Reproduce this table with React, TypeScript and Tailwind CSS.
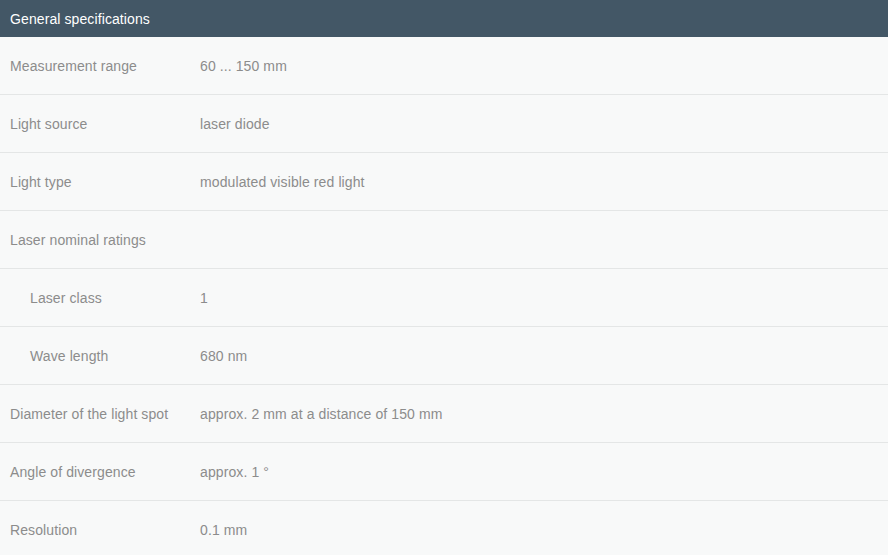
type Spec = {
    label: string,
    value?: string,
    indent?: boolean
}

const specs: Spec[] = [
    { label: "Measurement range", value: "60 ... 150 mm" },
    { label: "Light source", value: "laser diode" },
    { label: "Light type", value: "modulated visible red light" },
    { label: "Laser nominal ratings" },
    { label: "Laser class", value: "1", indent: true },
    { label: "Wave length", value: "680 nm", indent: true },
    { label: "Diameter of the light spot", value: "approx. 2 mm at a distance of 150 mm" },
    { label: "Angle of divergence", value: "approx. 1 °" },
    { label: "Resolution", value: "0.1 mm" },
]

export default function App() {
    return (
        <div className="w-[888px] h-[555px] overflow-hidden bg-[#f8f9f9] font-['Liberation_Sans',Arial,sans-serif] text-[14px] tracking-[0.1px]">
            <div className="h-[37px] bg-[#435766] text-white flex items-center px-[10px] pt-[1px]">
                General specifications
            </div>
            {specs.map((s, i) => (
                <div key={i} className="h-[58px] flex items-center border-b border-[#e4e6e6] text-[#8c8c8c] pt-[2px]">
                    <div className={s.indent ? "w-[200px] pl-[30px]" : "w-[200px] pl-[10px]"}>{s.label}</div>
                    <div>{s.value}</div>
                </div>
            ))}
        </div>
    )
}
